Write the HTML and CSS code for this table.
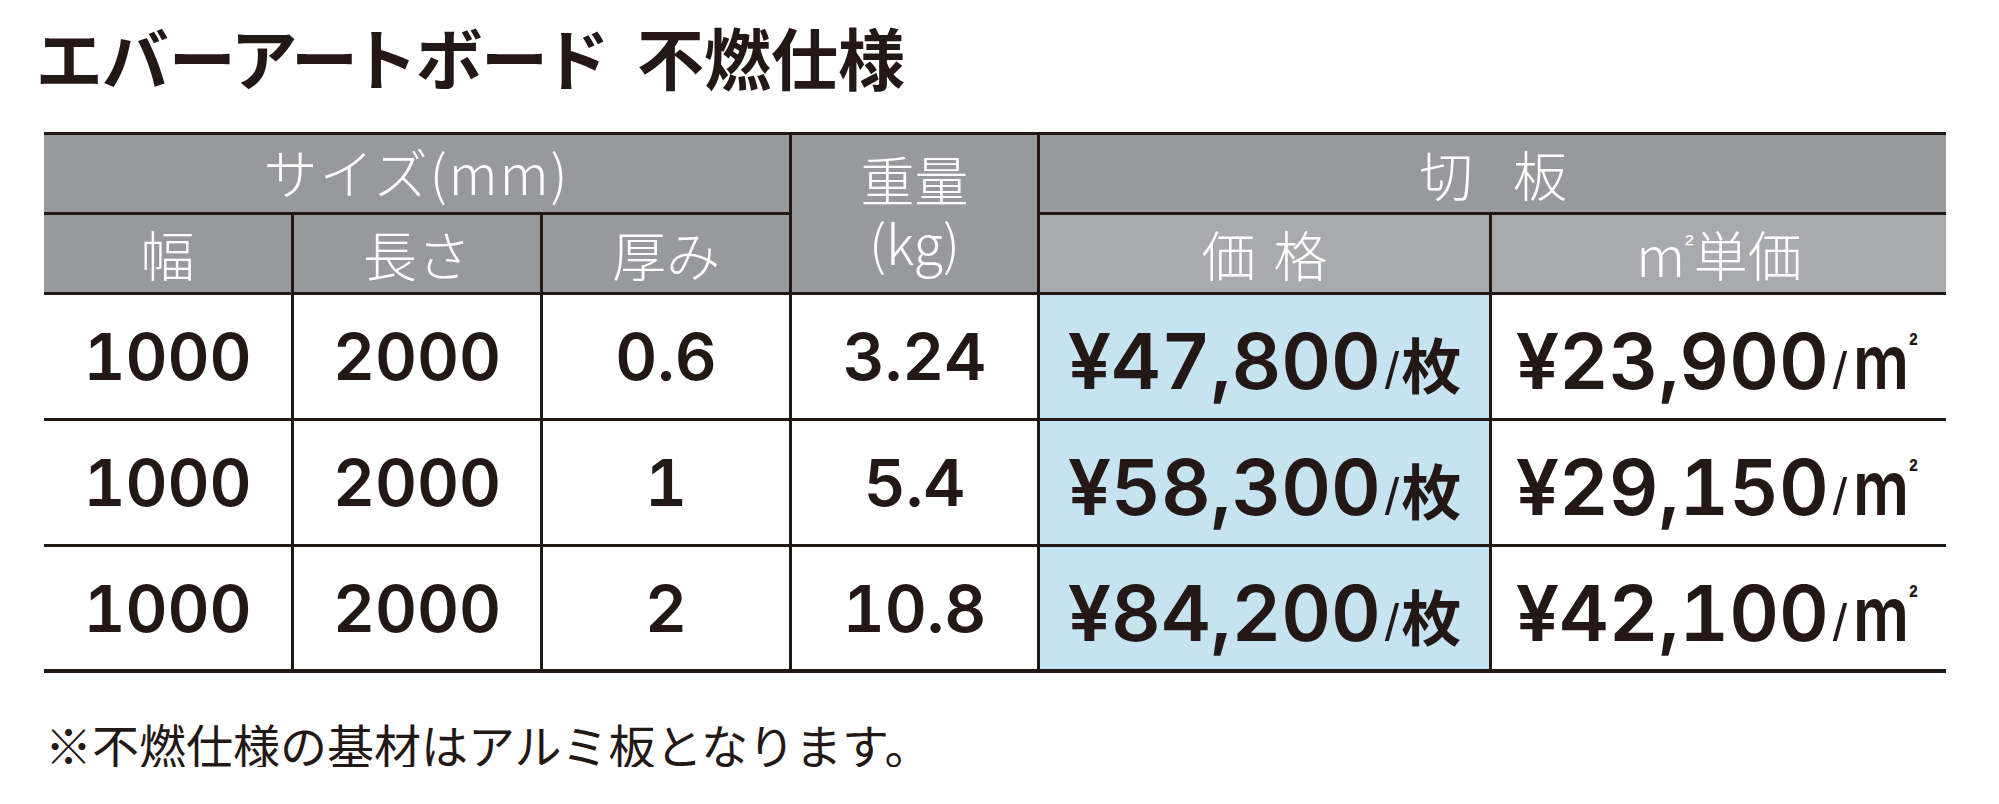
FILE: index.html
```html
<!DOCTYPE html>
<html lang="ja">
<head>
<meta charset="utf-8">
<title>エバーアートボード 不燃仕様</title>
<link rel="stylesheet" href="styles.css">
</head>
<body>
<div class="page">
  <h1 class="title"><span class="kana">エバーアートボード</span><span class="kanji">不燃仕様</span></h1>
  <div class="table">
    <div class="th c-size">サイズ(mm)</div>
    <div class="th c-weight"><p class="wl">重量<br>(kg)</p></div>
    <div class="th c-cut">切<span class="gap-l"></span>板</div>
    <div class="th">幅</div>
    <div class="th">長さ</div>
    <div class="th">厚み</div>
    <div class="th light">価<span class="gap-s"></span>格</div>
    <div class="th light"><span class="hm">m<span class="hsq">²</span></span>単価</div>

    <div class="td">1000</div>
    <div class="td">2000</div>
    <div class="td">0.6</div>
    <div class="td">3.24</div>
    <div class="td price blue">¥47,800<span class="slash">/</span><span class="unit">枚</span></div>
    <div class="td price">¥23,900<span class="slash">/</span><span class="bm">m<span class="bsq">²</span></span></div>

    <div class="td">1000</div>
    <div class="td">2000</div>
    <div class="td">1</div>
    <div class="td">5.4</div>
    <div class="td price blue">¥58,300<span class="slash">/</span><span class="unit">枚</span></div>
    <div class="td price">¥29,150<span class="slash">/</span><span class="bm">m<span class="bsq">²</span></span></div>

    <div class="td">1000</div>
    <div class="td">2000</div>
    <div class="td">2</div>
    <div class="td">10.8</div>
    <div class="td price blue">¥84,200<span class="slash">/</span><span class="unit">枚</span></div>
    <div class="td price">¥42,100<span class="slash">/</span><span class="bm">m<span class="bsq">²</span></span></div>
  </div>
  <p class="note">※不燃仕様の基材はアルミ板となります。</p>
</div>
</body>
</html>
```

FILE: styles.css
```css
html, body {
  margin: 0;
  padding: 0;
  background: #ffffff;
}

.page {
  padding-top: 23px;
  color: #231815;
  font-family: "Noto Sans CJK JP", "Noto Sans", sans-serif;
}

.title {
  margin: 0 0 0 37px;
  height: 66px;
  font-size: 67px;
  line-height: 66px;
  font-weight: 700;
  white-space: nowrap;
}

.title .kana {
  font-feature-settings: "palt";
  letter-spacing: 1px;
}

.title .kanji {
  margin-left: 29px;
}

.table {
  margin: 43px 0 0 44px;
  width: 1902px;
  display: grid;
  grid-template-columns: 247px 246px 246px 245px 449px 454px;
  grid-template-rows: 77px 77px 123px 123px 122px;
  gap: 3px;
  padding: 3px 0 4px;
  background: #231815;
}

.th {
  background: #98999c;
  color: #ffffff;
  font-family: "Noto Sans CJK JP", sans-serif;
  font-weight: 300;
  font-size: 54px;
  line-height: 1;
  display: flex;
  align-items: center;
  justify-content: center;
  white-space: nowrap;
}

.th.light {
  background: #a9aaad;
}

.c-size {
  grid-column: 1 / 4;
  letter-spacing: 2px;
  padding-bottom: 3px;
}

.c-weight {
  grid-column: 4;
  grid-row: 1 / 3;
  padding-bottom: 8px;
}

.wl {
  margin: 0;
  text-align: center;
  line-height: 63px;
}

.c-cut {
  grid-column: 5 / 7;
}

.gap-l {
  display: inline-block;
  width: 40px;
}

.gap-s {
  display: inline-block;
  width: 18px;
}

.hm {
  margin-right: 0;
}

.hsq {
  font-family: "Liberation Sans", sans-serif;
  font-size: 26px;
  line-height: 1;
  vertical-align: 25px;
}

.td {
  background: #ffffff;
  display: flex;
  align-items: center;
  justify-content: center;
  font-family: "Inter", "Liberation Sans", sans-serif;
  font-weight: 600;
  font-size: 65px;
  line-height: 1;
  font-variant-numeric: tabular-nums;
  white-space: nowrap;
  color: #231815;
}

.td.price {
  font-size: 77px;
  align-items: baseline;
  padding-top: 28px;
  box-sizing: border-box;
}

.td.blue {
  background: #c5e3f0;
}

.slash {
  font-family: "Liberation Sans", sans-serif;
  font-weight: 400;
  font-size: 52px;
  margin-left: 4px;
}

.unit {
  font-family: "Noto Sans CJK JP", sans-serif;
  font-weight: 700;
  font-size: 60px;
  margin-left: 2px;
}

.bm {
  display: inline-block;
  font-family: "Inter", sans-serif;
  font-weight: 600;
  font-size: 76px;
  margin-left: 6px;
  margin-right: -10px;
  transform: scaleX(0.82);
  transform-origin: left bottom;
}

.bsq {
  font-family: "Liberation Sans", sans-serif;
  font-weight: 700;
  font-size: 32px;
  line-height: 1;
  vertical-align: 33px;
}

.note {
  margin: 47px 0 0 45px;
  font-size: 47px;
  line-height: 47px;
  font-weight: 400;
  white-space: nowrap;
}
```
